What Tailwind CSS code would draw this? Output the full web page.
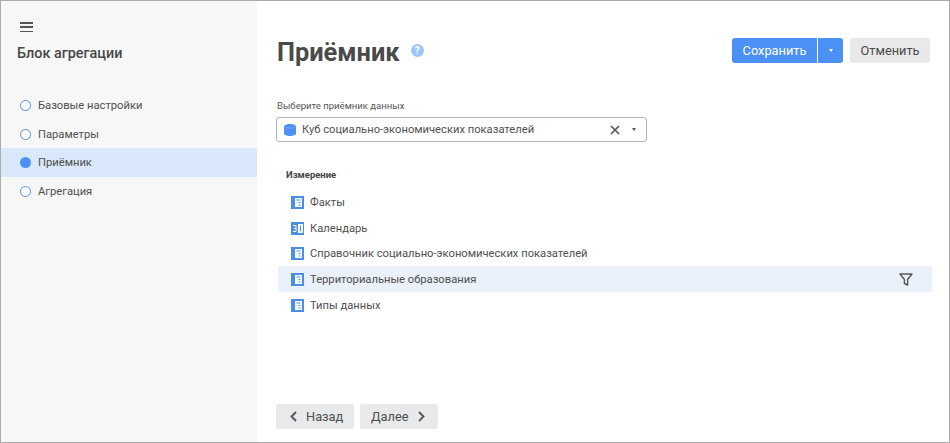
<!DOCTYPE html>
<html lang="ru">
<head>
<meta charset="utf-8">
<script src="https://cdn.jsdelivr.net/npm/@tailwindcss/browser@4"></script>
</head>
<body class="m-0 bg-white">
<div class="w-[950px] h-[443px] border border-[#ababab] flex overflow-hidden font-['Roboto',sans-serif] text-[#4f4f4f] text-[11.2px]">
  <aside class="w-[256px] shrink-0 bg-[#f7f7f7] flex flex-col">
    <button class="ml-[19px] mt-[21px] w-[14px] h-[10px] flex flex-col justify-between">
      <span class="block w-[13px] h-[1.5px] bg-[#555]"></span>
      <span class="block w-[13px] h-[1.5px] bg-[#555]"></span>
      <span class="block w-[13px] h-[1.5px] bg-[#555]"></span>
    </button>
    <h2 class="ml-[16px] mt-[12px] text-[14.4px] leading-[20px] font-medium text-[#484848]">Блок агрегации</h2>
    <nav class="mt-[27px] flex flex-col">
      <div class="h-[29px] flex items-center pl-[19px] gap-[7px]"><span class="w-[11px] h-[11px] rounded-full border border-[#4a90f0] bg-white"></span><span class="pt-[2px]">Базовые настройки</span></div>
      <div class="h-[28px] flex items-center pl-[19px] gap-[7px]"><span class="w-[11px] h-[11px] rounded-full border border-[#4a90f0] bg-white"></span><span class="pt-[2px]">Параметры</span></div>
      <div class="h-[29px] flex items-center pl-[19px] gap-[7px] bg-[#d9e8fb]"><span class="w-[11px] h-[11px] rounded-full bg-[#4a90f5]"></span><span class="pt-[2px]">Приёмник</span></div>
      <div class="h-[29px] flex items-center pl-[19px] gap-[7px]"><span class="w-[11px] h-[11px] rounded-full border border-[#4a90f0] bg-white"></span><span class="pt-[2px]">Агрегация</span></div>
    </nav>
  </aside>
  <main class="flex-1 flex flex-col pl-[19px] pr-[17px]">
    <header class="mt-[37px] mr-[2px] h-[25px] flex items-center justify-between">
      <div class="flex items-center gap-[11px] pl-px">
        <h1 class="text-[25.4px] leading-[26px] pt-[2px] font-bold text-[#4a4a4a]">Приёмник</h1>
        <span class="w-[13px] h-[13px] rounded-full bg-[#9cc6fa] text-white text-[10px] leading-[13px] font-bold text-center">?</span>
      </div>
      <div class="flex items-center">
        <button class="h-[25px] w-[85px] bg-[#4a90f5] text-white text-[12.8px] rounded-l-[3px]">Сохранить</button>
        <button class="h-[25px] w-[25px] ml-px bg-[#4a90f5] rounded-r-[3px] flex items-center justify-center"><span class="w-0 h-0 border-x-[2.5px] border-x-transparent border-t-[3px] border-t-white"></span></button>
        <button class="h-[25px] w-[80px] ml-[7px] bg-[#e8e9eb] text-[#4a4a4a] text-[12.8px] rounded-[3px]">Отменить</button>
      </div>
    </header>
    <label class="mt-[36px] block text-[9.55px] leading-[14px] text-[#555] pl-px">Выберите приёмник данных</label>
    <div class="mt-[4px] w-[371px] h-[25px] border border-[#b4b4b4] rounded-[3px] flex items-center pl-[7px] pr-[10px]">
      <svg class="w-[12px] h-[12px] shrink-0" viewBox="0 0 12 12"><path fill="#4a90f5" d="M0 2.5C0 1.2 2.7 0 6 0S12 1.2 12 2.5V9.5C12 10.8 9.3 12 6 12S0 10.8 0 9.5Z"/><path fill="none" stroke="#82b3f8" stroke-width=".7" d="M.3 2.8C1.5 4.5 10.5 4.5 11.7 2.8"/></svg>
      <span class="ml-[6px] flex-1 pt-[2px]">Куб социально-экономических показателей</span>
      <svg class="w-[10px] h-[10px]" viewBox="0 0 10 10"><path d="M1 1L9 9M9 1L1 9" stroke="#555" stroke-width="1.7" fill="none"/></svg>
      <span class="ml-[12px] w-0 h-0 border-x-[2.5px] border-x-transparent border-t-[3px] border-t-[#555]"></span>
    </div>
    <div class="mt-[26px] pl-[10px] text-[9.5px] leading-[14px] font-bold text-[#444]">Измерение</div>
    <ul class="mt-[7px] ml-[2px] flex flex-col">
      <li class="h-[26px] flex items-center pl-[13px] gap-[6px]">
        <svg class="w-[13px] h-[13px] shrink-0" viewBox="0 0 13 13"><rect width="13" height="13" fill="#4a90e2"/><rect x="4" y="2" width="7" height="9" fill="#fff"/><path d="M5.5 4H9.5M7.5 6.5H9.5M7.5 9H9.5" stroke="#4a90e2" stroke-width="1"/></svg>
        <span class="pt-[2px]">Факты</span>
      </li>
      <li class="h-[26px] flex items-center pl-[13px] gap-[6px]">
        <svg class="w-[13px] h-[13px] shrink-0" viewBox="0 0 13 13"><rect width="13" height="13" fill="#4a90e2"/><rect x="7" y="2" width="5" height="9" fill="#fff"/><path d="M2 3.5H5V6.5H3M5 6.5V9.5H2" stroke="#fff" stroke-width="1" fill="none"/><path d="M9.5 3.5V9.5" stroke="#4a90e2" stroke-width="1"/></svg>
        <span class="pt-[2px]">Календарь</span>
      </li>
      <li class="h-[25px] flex items-center pl-[13px] gap-[6px]">
        <svg class="w-[13px] h-[13px] shrink-0" viewBox="0 0 13 13"><rect width="13" height="13" fill="#4a90e2"/><rect x="4" y="2" width="7" height="9" fill="#fff"/><path d="M5.5 4H9.5M7.5 6.5H9.5M7.5 9H9.5" stroke="#4a90e2" stroke-width="1"/></svg>
        <span class="pt-[2px]">Справочник социально-экономических показателей</span>
      </li>
      <li class="h-[26px] flex items-center pl-[13px] pr-[19px] gap-[6px] bg-[#eaf1fb]">
        <svg class="w-[13px] h-[13px] shrink-0" viewBox="0 0 13 13"><rect width="13" height="13" fill="#4a90e2"/><rect x="4" y="2" width="7" height="9" fill="#fff"/><path d="M5.5 4H9.5M7.5 6.5H9.5M7.5 9H9.5" stroke="#4a90e2" stroke-width="1"/></svg>
        <span class="flex-1 pt-[2px]">Территориальные образования</span>
        <svg class="w-[14px] h-[13px]" viewBox="0 0 14 13"><path d="M1 1H13L8.6 6.5V12L5.4 10.5V6.5Z" fill="none" stroke="#555" stroke-width="1.4" stroke-linejoin="round"/></svg>
      </li>
      <li class="h-[26px] flex items-center pl-[13px] gap-[6px]">
        <svg class="w-[13px] h-[13px] shrink-0" viewBox="0 0 13 13"><rect width="13" height="13" fill="#4a90e2"/><rect x="4" y="2" width="7" height="9" fill="#fff"/><path d="M5.5 4H9.5M7.5 6.5H9.5M7.5 9H9.5" stroke="#4a90e2" stroke-width="1"/></svg>
        <span class="pt-[2px]">Типы данных</span>
      </li>
    </ul>
    <div class="mt-auto mb-[13px] flex gap-[6px]">
      <button class="h-[25px] w-[78px] bg-[#e8e9eb] rounded-[3px] flex items-center pl-[14px] gap-[9px] text-[12.8px]">
        <svg class="w-[7px] h-[11px]" viewBox="0 0 7 11"><path d="M6 1L1.5 5.5L6 10" fill="none" stroke="#555" stroke-width="1.8"/></svg><span>Назад</span>
      </button>
      <button class="h-[25px] w-[78px] bg-[#e8e9eb] rounded-[3px] flex items-center pl-[11px] gap-[9px] text-[12.8px]">
        <span>Далее</span><svg class="w-[7px] h-[11px]" viewBox="0 0 7 11"><path d="M1 1L5.5 5.5L1 10" fill="none" stroke="#555" stroke-width="1.8"/></svg>
      </button>
    </div>
  </main>
</div>
</body>
</html>
